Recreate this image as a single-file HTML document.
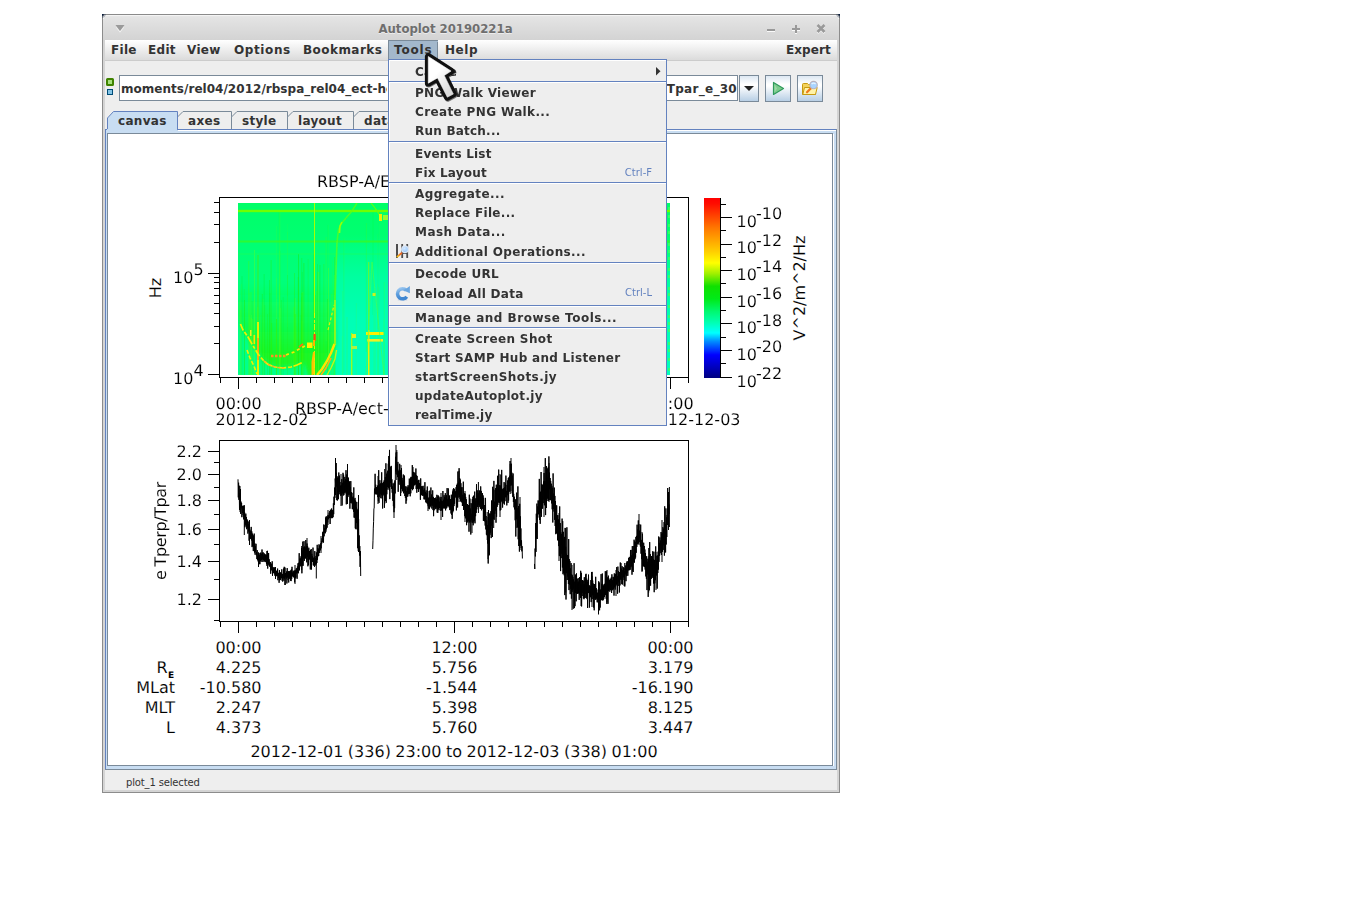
<!DOCTYPE html>
<html><head><meta charset="utf-8"><title>Autoplot 20190221a</title>
<style>
html,body{margin:0;padding:0;background:#fff;}
body{width:1345px;height:916px;position:relative;overflow:hidden;font-family:"DejaVu Sans","Liberation Sans",sans-serif;}
.a{position:absolute;}
.ui{font-family:"DejaVu Sans","Liberation Sans",sans-serif;font-weight:bold;font-size:12px;letter-spacing:0.3px;color:#333;white-space:nowrap;line-height:16px;}
#win{left:102px;top:14px;width:736px;height:777px;border:1px solid #8c8c8c;background:#d4d4d4;}
#tbar{left:103px;top:15px;width:736px;height:25px;background:linear-gradient(#ececec 0,#e4e4e4 2px,#d3d3d3 100%);}
#title{left:103px;top:16px;text-shadow:0 1px 0 rgba(255,255,255,.55);width:685px;height:25px;text-align:center;font-family:"DejaVu Sans Condensed","DejaVu Sans",sans-serif;font-weight:bold;font-size:13px;line-height:25px;color:#6e6e6e;white-space:nowrap;}
#mbar{left:105px;top:40px;width:732px;height:20px;background:linear-gradient(#ffffff,#dbdbdb);border-bottom:1px solid #ccc;}
#content{left:105px;top:61px;width:732px;height:729px;background:#eee;}
.mi{top:42px;height:16px;}
#tools{left:388px;top:40px;width:50px;height:20px;background:#a3b8cc;box-sizing:border-box;border-top:1px solid #7a8a99;border-left:1px solid #7a8a99;}
#tools i{position:absolute;right:0;top:1px;width:1px;height:19px;background:#7a8a99;}
#tools b{display:none}
#field{left:119px;top:75px;width:617px;height:24px;border:1px solid #7a8a99;background:#fff;}
.btn{top:75px;height:25px;border:1px solid #7a8a99;background:linear-gradient(#dde8f3 0,#ffffff 33%,#ffffff 40%,#b8cfe5 100%);}
.tab{top:111px;height:18px;}
.tabt{top:113px;}
#pane{left:105px;top:129px;width:732px;height:641px;background:#c8ddf2;}
#canvas{left:108px;top:134px;width:724px;height:631px;background:#fff;}
#status{left:126px;top:777px;font-size:10px;font-weight:normal;line-height:12px;color:#333;letter-spacing:-0.15px;}
#popup{left:388px;top:59px;width:277px;height:365px;border:1px solid #6382bf;background:#eee;}
#popup .hl{left:0;top:0;width:277px;height:1px;background:#fff;}
#popup .hv{left:0;top:0;width:1px;height:365px;background:#fff;}
.sep{left:389px;width:277px;height:1px;background:#6382bf;border-bottom:1px solid #fff;}
.it{left:415px;}
.acc{font-size:10px;font-weight:normal;color:#6382bf;line-height:12px;letter-spacing:0;}
svg text{font-family:"DejaVu Sans","Liberation Sans",sans-serif;font-size:16px;fill:#000;word-spacing:-0.6px;text-rendering:geometricPrecision;stroke:#fff;stroke-width:0.12px;paint-order:fill stroke;}
</style></head><body>
<div id="win" class="a"></div>
<div id="tbar" class="a"></div>
<svg class="a" style="left:102px;top:14px" width="738" height="6" viewBox="0 0 738 6">
<path d="M0 0H5L0 5Z M738 0H733L738 5Z" fill="#061a3a"/>
<path d="M0.5 5V3.5Q0.5 0.5 3.5 0.5H734.5Q737.5 0.5 737.5 3.5V5" fill="none" stroke="#8a8a8a"/>
<path d="M1.5 5V3.5Q1.5 1.5 3.5 1.5H734.5Q736.5 1.5 736.5 3.5V5" fill="none" stroke="#f4f4f4"/>
</svg>
<div id="title" class="a">Autoplot 20190221a</div>
<svg class="a" style="left:110px;top:20px" width="24" height="16" viewBox="0 0 24 16"><path d="M5.5 5H14.5L10 11Z" fill="#9a9a9a"/><path d="M6.3 7.3L10 12.2L13.7 7.3" fill="none" stroke="#f2f2f2" stroke-width=".9"/><path d="M6 10.2L9.5 10.2" stroke="#eee" stroke-width="0" /></svg>
<svg class="a" style="left:760px;top:20px" width="76" height="18" viewBox="0 0 76 18">
<g fill="#fafafa"><rect x="7" y="11" width="8" height="1"/><rect x="35" y="13" width="2" height="1"/><rect x="32" y="10" width="3" height="1"/><rect x="37" y="10" width="3" height="1"/></g>
<g stroke="#fafafa" stroke-width="2.2" fill="none"><path d="M57.5 6L64.5 13M64.5 6L57.5 13"/></g>
<g fill="#999"><rect x="7" y="9" width="8" height="2"/><rect x="32" y="8" width="8" height="2"/><rect x="35" y="5" width="2" height="8"/></g>
<g stroke="#999" stroke-width="2.6" fill="none"><path d="M57.5 5L64.5 12M64.5 5L57.5 12"/></g>
</svg>
<div id="mbar" class="a"></div>
<div id="content" class="a"></div>
<div id="tools" class="a"><i></i><b></b></div>
<div class="a ui mi" style="left:111px">File</div>
<div class="a ui mi" style="left:148px">Edit</div>
<div class="a ui mi" style="left:187px">View</div>
<div class="a ui mi" style="left:234px;letter-spacing:.6px">Options</div>
<div class="a ui mi" style="left:303px;letter-spacing:.45px">Bookmarks</div>
<div class="a ui mi" style="left:394px;letter-spacing:.8px">Tools</div>
<div class="a ui mi" style="left:445px;letter-spacing:.55px">Help</div>
<div class="a ui mi" style="left:786px;letter-spacing:.06px">Expert</div>
<!-- address bar -->
<div class="a" style="left:106px;top:78px;width:4px;height:4px;border:2px solid #3f8300;background:#a6e07c;border-radius:1.5px"></div>
<div class="a" style="left:107px;top:89px;width:4px;height:4px;border:1px solid #004c78;background:#82c4e6"></div>
<div id="field" class="a"></div>
<div class="a ui" style="left:121px;top:81px;width:266px;overflow:hidden;letter-spacing:0.03px">moments/rel04/2012/rbspa_rel04_ect-hope-MOM-L3_$Y$m$d_v$(v,sep).cdf</div>
<div class="a ui" style="left:560px;top:81px;width:177px;overflow:hidden;text-align:right;direction:rtl"><span style="direction:ltr;unicode-bidi:bidi-override">?Tperp_e_30/Tpar_e_30</span></div>
<div class="a btn" style="left:739px;width:18px"></div>
<svg class="a" style="left:743px;top:85px" width="12" height="8"><path d="M1 1H11L6 6Z" fill="#222"/></svg>
<div class="a btn" style="left:765px;width:24px"></div>
<svg class="a" style="left:765px;top:75px" width="26" height="27" viewBox="0 0 26 27"><path d="M8.5 7.5V19.5L18.5 13.5Z" fill="#7ccb8c" stroke="#2f9a5c" stroke-width="1.2" stroke-linejoin="round"/><path d="M9.5 9.5V17.5L12 13.5Z" fill="#a8e0b0" opacity=".7"/></svg>
<div class="a btn" style="left:797px;width:24px"></div>
<svg class="a" style="left:797px;top:75px" width="26" height="27" viewBox="0 0 26 27">
<path d="M5.5 9.5Q5.5 8.5 6.5 8.5H10.5L11.5 9.5H17.5Q18.5 9.5 18.5 10.5V19.5H5.5Z" fill="#f3d25c" stroke="#c79a10"/>
<path d="M7.5 12.5H20.2L18.5 19.5H5.8Z" fill="#fff3a8" stroke="#c79a10" stroke-linejoin="round"/>
<path d="M10 17.3L13.6 13.4" stroke="#ee7a1c" stroke-width="2.2" stroke-linecap="round"/>
<circle cx="16.6" cy="10.1" r="3.7" fill="#a9d4ff" stroke="#b9b2bd" stroke-width="1.1"/>
<path d="M14.6 9.2Q16.4 7 18.6 9" stroke="#e6f3ff" stroke-width="1.2" fill="none"/>
</svg>
<!-- tabs -->
<svg class="a" style="left:105px;top:108px" width="290" height="24" viewBox="105 108 290 24">
<g fill="#eee" stroke="#7a8a99">
<path d="M177.5 129.5V117L183 111.5H231.5V129.5"/>
<path d="M231.5 117L237 111.5H287.5V129.5"/>
<path d="M287.5 117L293 111.5H353.5V129.5"/>
<path d="M353.5 117L359 111.5H420.5V129.5"/>
</g>
<path d="M107.5 130V118L113.5 111.5H177.5V129.5" fill="#c8ddf2" stroke="#6382bf"/>
</svg>
<div class="a ui tabt" style="left:118px">canvas</div>
<div class="a ui tabt" style="left:188px">axes</div>
<div class="a ui tabt" style="left:242px">style</div>
<div class="a ui tabt" style="left:298px">layout</div>
<div class="a ui tabt" style="left:364px">data</div>
<div id="pane" class="a"></div>
<div class="a" style="left:105px;top:129px;width:732px;height:1px;background:#6382bf"></div>
<div class="a" style="left:107px;top:129px;width:70px;height:1px;background:#c8ddf2"></div>
<div class="a" style="left:178px;top:130px;width:658px;height:1px;background:#fff"></div>
<div class="a" style="left:105px;top:129px;width:1px;height:641px;background:#6382bf"></div>
<div class="a" style="left:836px;top:129px;width:1px;height:641px;background:#7a8a99"></div>
<div class="a" style="left:105px;top:769px;width:732px;height:1px;background:#7a8a99"></div>
<div class="a" style="left:107px;top:133px;width:726px;height:633px;background:#7a8a99"></div>
<div id="canvas" class="a"></div>
<div class="a" style="left:833px;top:134px;width:1px;height:632px;background:#fff"></div>
<div id="status" class="a ui">plot_1 selected</div>
<svg class="a" style="left:108px;top:134px" width="724" height="631" viewBox="108 134 724 631" shape-rendering="crispEdges">
<defs>
<linearGradient id="cb" x1="0" y1="0" x2="0" y2="1">
<stop offset="0" stop-color="#ff0000"/><stop offset="0.03" stop-color="#ff0c00"/><stop offset="0.167" stop-color="#ff7800"/><stop offset="0.30" stop-color="#ffd000"/>
<stop offset="0.361" stop-color="#ffff00"/><stop offset="0.42" stop-color="#a0f000"/><stop offset="0.49" stop-color="#10e000"/><stop offset="0.56" stop-color="#00ea18"/>
<stop offset="0.63" stop-color="#00f870"/><stop offset="0.69" stop-color="#00ffb0"/><stop offset="0.75" stop-color="#00ffff"/><stop offset="0.795" stop-color="#0090ff"/>
<stop offset="0.872" stop-color="#0000ff"/><stop offset="0.93" stop-color="#0000c8"/><stop offset="1" stop-color="#000080"/>
</linearGradient>
<linearGradient id="sg1" x1="0" y1="0" x2="0" y2="1"><stop offset="0" stop-color="#00ff68"/><stop offset="0.35" stop-color="#00ff78"/><stop offset="1" stop-color="#00ff8c"/></linearGradient>
<radialGradient id="sg2" cx="0.5" cy="1" r="1" gradientTransform="translate(0 0) scale(1 1)"><stop offset="0" stop-color="#10f000" stop-opacity="1"/><stop offset="0.55" stop-color="#08f810" stop-opacity=".85"/><stop offset="1" stop-color="#00ff40" stop-opacity="0"/></radialGradient>
<radialGradient id="sg3" cx="0.5" cy="0.75" r="0.7"><stop offset="0" stop-color="#00ffc0" stop-opacity="1"/><stop offset="0.6" stop-color="#00ffa8" stop-opacity=".8"/><stop offset="1" stop-color="#00ff80" stop-opacity="0"/></radialGradient>
<clipPath id="spc"><rect x="238" y="203" width="432" height="172"/></clipPath>
<filter id="bl" x="-20%" y="-20%" width="140%" height="140%"><feGaussianBlur stdDeviation="0.6"/></filter>
</defs>
<g clip-path="url(#spc)" shape-rendering="auto">
<rect x="238" y="203" width="433" height="172" fill="url(#sg1)"/>
<defs><filter id="b8" x="-50%" y="-50%" width="200%" height="200%"><feGaussianBlur stdDeviation="9"/></filter><filter id="b1" x="-50%" y="-50%" width="200%" height="200%"><feGaussianBlur stdDeviation="0.5"/></filter></defs>
<defs><linearGradient id="cy" x1="0" y1="0" x2="0" y2="1"><stop offset="0" stop-color="#00ffb0" stop-opacity="0"/><stop offset="0.3" stop-color="#00ffb0" stop-opacity=".7"/><stop offset="0.6" stop-color="#00ffb8" stop-opacity=".95"/><stop offset="1" stop-color="#00ffbc" stop-opacity="1"/></linearGradient><linearGradient id="gr" x1="0" y1="0" x2="0" y2="1"><stop offset="0.25" stop-color="#18f820" stop-opacity="0"/><stop offset="0.55" stop-color="#18f820" stop-opacity=".45"/><stop offset="0.8" stop-color="#1cf618" stop-opacity=".85"/><stop offset="1" stop-color="#1cf618" stop-opacity=".9"/></linearGradient><filter id="b2" x="-10%" y="-10%" width="120%" height="120%"><feGaussianBlur stdDeviation="2.2"/></filter></defs>
<rect x="336" y="235" width="336" height="141" fill="url(#cy)"/>
<rect x="331" y="300" width="8" height="76" fill="#00ffa0" opacity=".5" filter="url(#b2)"/>
<path d="M236 250H335.5V344L327 361L318 378H309L303 362L291 367H275L263 360L252 344L243 330L236 314Z" fill="url(#gr)" filter="url(#b2)"/>
<path d="M236 330L243 336L252 350L262 364L275 371H291L303 366L308 378H236Z" fill="#00ff8c" opacity=".7" filter="url(#b2)"/>
<g filter="url(#b1)"><rect x="261.8" y="294" width="1.0" height="81" fill="#20e800" opacity="0.31"/><rect x="294.8" y="298" width="0.8" height="77" fill="#60ff20" opacity="0.33"/><rect x="257.4" y="307" width="0.8" height="68" fill="#60ff20" opacity="0.35"/><rect x="253.5" y="301" width="1.0" height="74" fill="#60ff20" opacity="0.18"/><rect x="313.6" y="263" width="0.8" height="112" fill="#30f000" opacity="0.39"/><rect x="318.1" y="272" width="1.0" height="103" fill="#60ff20" opacity="0.39"/><rect x="280.0" y="308" width="0.6" height="67" fill="#60ff20" opacity="0.42"/><rect x="248.4" y="261" width="0.8" height="114" fill="#50ff10" opacity="0.44"/><rect x="280.9" y="300" width="0.8" height="75" fill="#20e800" opacity="0.32"/><rect x="276.0" y="278" width="1.0" height="97" fill="#60ff20" opacity="0.24"/><rect x="271.3" y="323" width="0.8" height="52" fill="#30f000" opacity="0.45"/><rect x="303.4" y="263" width="1.0" height="112" fill="#20e800" opacity="0.42"/><rect x="293.6" y="307" width="1.0" height="68" fill="#50ff10" opacity="0.40"/><rect x="294.1" y="273" width="0.8" height="102" fill="#30f000" opacity="0.41"/><rect x="334.0" y="257" width="0.8" height="118" fill="#30f000" opacity="0.42"/><rect x="240.9" y="284" width="0.6" height="91" fill="#60ff20" opacity="0.19"/><rect x="298.0" y="254" width="1.0" height="121" fill="#20e800" opacity="0.42"/><rect x="333.1" y="290" width="0.8" height="85" fill="#30f000" opacity="0.18"/><rect x="249.4" y="293" width="0.8" height="82" fill="#50ff10" opacity="0.26"/><rect x="264.3" y="305" width="0.8" height="70" fill="#20e800" opacity="0.28"/><rect x="252.3" y="319" width="0.8" height="56" fill="#60ff20" opacity="0.41"/><rect x="276.1" y="319" width="1.0" height="56" fill="#30f000" opacity="0.44"/><rect x="316.9" y="272" width="0.8" height="103" fill="#50ff10" opacity="0.30"/><rect x="263.8" y="274" width="0.6" height="101" fill="#20e800" opacity="0.39"/><rect x="333.8" y="275" width="1.0" height="100" fill="#60ff20" opacity="0.34"/><rect x="251.8" y="301" width="0.8" height="74" fill="#20e800" opacity="0.28"/><rect x="327.1" y="299" width="1.0" height="76" fill="#20e800" opacity="0.31"/><rect x="295.6" y="326" width="0.8" height="49" fill="#30f000" opacity="0.25"/><rect x="282.8" y="297" width="0.6" height="78" fill="#20e800" opacity="0.28"/><rect x="269.0" y="280" width="0.8" height="95" fill="#20e800" opacity="0.39"/><rect x="249.1" y="315" width="0.8" height="60" fill="#50ff10" opacity="0.32"/><rect x="301.8" y="272" width="0.6" height="103" fill="#20e800" opacity="0.36"/><rect x="301.4" y="258" width="0.8" height="117" fill="#20e800" opacity="0.36"/><rect x="260.5" y="315" width="0.6" height="60" fill="#50ff10" opacity="0.27"/><rect x="301.4" y="321" width="0.8" height="54" fill="#60ff20" opacity="0.24"/><rect x="250.6" y="292" width="0.8" height="83" fill="#50ff10" opacity="0.40"/><rect x="319.5" y="265" width="0.8" height="110" fill="#20e800" opacity="0.40"/><rect x="300.6" y="315" width="1.0" height="60" fill="#20e800" opacity="0.22"/><rect x="267.0" y="314" width="0.8" height="61" fill="#20e800" opacity="0.27"/><rect x="279.0" y="284" width="0.6" height="91" fill="#60ff20" opacity="0.43"/><rect x="254.0" y="250" width="1.0" height="125" fill="#60ff20" opacity="0.44"/><rect x="328.0" y="268" width="1.0" height="107" fill="#60ff20" opacity="0.38"/><rect x="331.5" y="294" width="0.6" height="81" fill="#50ff10" opacity="0.41"/><rect x="332.2" y="260" width="0.6" height="115" fill="#50ff10" opacity="0.19"/><rect x="316.1" y="291" width="0.8" height="84" fill="#50ff10" opacity="0.34"/><rect x="240.3" y="310" width="1.0" height="65" fill="#50ff10" opacity="0.26"/><rect x="302.6" y="292" width="0.6" height="83" fill="#60ff20" opacity="0.43"/><rect x="297.8" y="277" width="1.0" height="98" fill="#20e800" opacity="0.31"/><rect x="314.1" y="278" width="0.6" height="97" fill="#50ff10" opacity="0.32"/><rect x="317.4" y="264" width="0.6" height="111" fill="#20e800" opacity="0.40"/><rect x="239.7" y="300" width="0.6" height="75" fill="#60ff20" opacity="0.38"/><rect x="262.8" y="299" width="0.6" height="76" fill="#60ff20" opacity="0.31"/><rect x="313.5" y="250" width="0.6" height="125" fill="#30f000" opacity="0.19"/><rect x="243.8" y="289" width="1.0" height="86" fill="#30f000" opacity="0.20"/><rect x="287.2" y="275" width="0.6" height="100" fill="#20e800" opacity="0.27"/><rect x="301.1" y="297" width="0.8" height="78" fill="#20e800" opacity="0.23"/><rect x="270.6" y="260" width="1.0" height="115" fill="#30f000" opacity="0.38"/><rect x="315.3" y="295" width="0.8" height="80" fill="#30f000" opacity="0.30"/><rect x="301.4" y="293" width="1.0" height="82" fill="#30f000" opacity="0.42"/><rect x="244.1" y="300" width="0.8" height="75" fill="#20e800" opacity="0.44"/><rect x="279.2" y="251" width="1.0" height="124" fill="#50ff10" opacity="0.25"/><rect x="295.6" y="314" width="0.8" height="61" fill="#50ff10" opacity="0.22"/><rect x="241.7" y="276" width="0.6" height="99" fill="#20e800" opacity="0.31"/><rect x="250.8" y="315" width="1.0" height="60" fill="#60ff20" opacity="0.21"/><rect x="269.6" y="293" width="0.8" height="82" fill="#30f000" opacity="0.22"/><rect x="313.3" y="254" width="1.0" height="121" fill="#30f000" opacity="0.21"/><rect x="323.5" y="264" width="0.8" height="111" fill="#30f000" opacity="0.41"/><rect x="250.6" y="318" width="1.0" height="57" fill="#60ff20" opacity="0.44"/><rect x="294.6" y="314" width="1.0" height="61" fill="#30f000" opacity="0.32"/><rect x="307.7" y="259" width="1.0" height="116" fill="#30f000" opacity="0.20"/><rect x="287.3" y="224" width="0.6" height="72" fill="#30ff30" opacity="0.19"/><rect x="276.2" y="226" width="1.0" height="73" fill="#30ff30" opacity="0.27"/><rect x="378.9" y="224" width="0.6" height="90" fill="#30ff30" opacity="0.20"/><rect x="377.5" y="234" width="0.6" height="95" fill="#30ff30" opacity="0.26"/><rect x="325.4" y="237" width="1.5" height="104" fill="#30ff30" opacity="0.28"/><rect x="372.7" y="209" width="0.6" height="106" fill="#30ff30" opacity="0.25"/><rect x="343.1" y="238" width="1.5" height="135" fill="#30ff30" opacity="0.19"/><rect x="278.8" y="210" width="1.5" height="108" fill="#30ff30" opacity="0.34"/><rect x="365.9" y="223" width="1.0" height="129" fill="#30ff30" opacity="0.32"/><rect x="327.7" y="225" width="1.0" height="157" fill="#30ff30" opacity="0.21"/><rect x="278.9" y="233" width="0.6" height="63" fill="#30ff30" opacity="0.22"/><rect x="287.0" y="232" width="0.6" height="95" fill="#30ff30" opacity="0.29"/><rect x="373.7" y="292" width="0.8" height="83" fill="#40ff40" opacity="0.37"/><rect x="383.3" y="319" width="0.8" height="56" fill="#40ff40" opacity="0.21"/><rect x="387.7" y="284" width="0.8" height="91" fill="#40ff40" opacity="0.48"/><rect x="377.6" y="333" width="0.8" height="42" fill="#40ff40" opacity="0.21"/><rect x="383.7" y="333" width="0.8" height="42" fill="#40ff40" opacity="0.39"/><rect x="377.3" y="284" width="0.8" height="91" fill="#40ff40" opacity="0.27"/><rect x="352.2" y="333" width="0.8" height="42" fill="#40ff40" opacity="0.43"/><rect x="346.6" y="317" width="0.8" height="58" fill="#40ff40" opacity="0.40"/><rect x="341.8" y="336" width="0.8" height="39" fill="#40ff40" opacity="0.25"/><rect x="342.2" y="291" width="0.8" height="84" fill="#40ff40" opacity="0.23"/><rect x="378.3" y="287" width="0.8" height="88" fill="#40ff40" opacity="0.28"/><rect x="383.9" y="282" width="0.8" height="93" fill="#40ff40" opacity="0.34"/><rect x="375.2" y="300" width="0.8" height="75" fill="#40ff40" opacity="0.21"/><rect x="355.9" y="303" width="0.8" height="72" fill="#40ff40" opacity="0.22"/></g>
<g filter="url(#b1)">
<rect x="238" y="210" width="433" height="2" fill="#7cff00"/><rect x="238" y="209.5" width="433" height="3" fill="#60ff10" opacity=".4"/>
<rect x="238" y="240.5" width="433" height="2" fill="#38f820" opacity=".75"/>
<rect x="238" y="253.5" width="433" height="1" fill="#20ff50" opacity=".5"/>
<rect x="314" y="203" width="1" height="110" fill="#a8ff00"/>
<path d="M314.5 313V375" stroke="#d8f800" stroke-width="1" stroke-dasharray="5 2 3 1 6 2"/>
<rect x="313.5" y="334" width="2.2" height="7" fill="#ff4a10"/><rect x="313" y="340" width="2" height="6" fill="#ffb000"/><rect x="313" y="352" width="2" height="22" fill="#ffd800" opacity=".9"/>
<rect x="257.5" y="255" width="1" height="70" fill="#50f000" opacity=".7"/><rect x="257" y="322" width="2" height="53" fill="#e0f000"/><rect x="257.3" y="338" width="1.6" height="22" fill="#ff9a10"/>
<rect x="253.5" y="335" width="1.6" height="9" fill="#ffe000"/><rect x="250" y="330" width="1.5" height="6" fill="#f0f020"/>
<g fill="none" filter="url(#b1)">
<path d="M240.5 324L243 330L248 337L252 344L258 354L263 360L268 364.5L275 367L283 368L291 367L297 365L303 362" stroke="#f0f000" stroke-width="1.7" stroke-dasharray="7 2 4 1.5 9 2 3 2"/>
<path d="M264 361L270 365.5L277 367.5L284 368" stroke="#ffb020" stroke-width="1.6" stroke-dasharray="3 2"/>
<path d="M247 350L250 358L254 366L257 374" stroke="#f0f000" stroke-width="1.6" stroke-dasharray="4 2"/>
<path d="M271 356H286" stroke="#ff9020" stroke-width="2.6" stroke-dasharray="2.5 1.5"/>
<path d="M286 355L294 352L300 348.5L306 345.5" stroke="#f8e800" stroke-width="1.8" stroke-dasharray="3 3"/>
<path d="M307 342.5H312.5V348H307Z" fill="#fff000" stroke="none"/>
<path d="M299 347L303 344" stroke="#ff7010" stroke-width="1.6"/>
<path d="M317 375L322 369L327 361L331 353L334.5 344" stroke="#ffe400" stroke-width="2.4"/>
<path d="M321 375L326 368L331 358" stroke="#ffb010" stroke-width="1.6"/>
<path d="M327 375L331 368L335 359L336.5 350" stroke="#f0f000" stroke-width="1.4" opacity=".8"/>
<path d="M312.5 375V362L314 352" stroke="#ffc000" stroke-width="2"/>
<path d="M335 345V300" stroke="#c8f800" stroke-width="1.3"/>
<path d="M328 330L331 318L334 305" stroke="#e0f000" stroke-width="1.2" stroke-dasharray="3 2"/>
<path d="M335 300L336 270L337 242L338.5 230L341 224L346 218L352 211L357 203" stroke="#60ff10" stroke-width="1.6" opacity=".7"/>
<path d="M339.5 233L340 226L342 222" stroke="#b0ff00" stroke-width="1.6" opacity=".8"/>
<path d="M371 203L375 208L379 214L381 220" stroke="#60ff10" stroke-width="1.2"/>
</g>
<rect x="379" y="214" width="3" height="7" fill="#f0f000"/><rect x="383" y="215" width="5" height="5" fill="#c0f820" opacity=".8"/>
<rect x="351.2" y="333" width="1" height="42" fill="#c0f800"/><rect x="368.2" y="262" width="1" height="113" fill="#70f820"/><rect x="368" y="330" width="1.4" height="45" fill="#e8f000"/>
<rect x="352" y="334" width="4" height="4" fill="#e0f020" filter="url(#b1)"/><rect x="351" y="346" width="6" height="3" fill="#b0f040" filter="url(#b1)"/>
<rect x="366" y="332" width="17.5" height="3" fill="#fff000" filter="url(#b1)"/><rect x="367" y="339" width="16" height="2.6" fill="#f0f020" filter="url(#b1)"/>
<rect x="372.5" y="293" width="3.5" height="3" fill="#d0f020"/>
<path d="M372 262L366 375M372 262L384 375" stroke="#50ff40" stroke-width="1" opacity=".6" fill="none"/>
</g>
<rect x="668" y="207" width="2" height="3" fill="#40ff60" opacity=".8"/>
<rect x="668" y="215" width="2" height="3" fill="#40ff60" opacity=".8"/>
<rect x="668" y="224" width="2" height="3" fill="#40ff60" opacity=".8"/>
<rect x="668" y="231" width="2" height="3" fill="#40ff60" opacity=".8"/>
<rect x="668" y="243" width="2" height="3" fill="#40ff60" opacity=".8"/>
<rect x="668" y="250" width="2" height="3" fill="#40ff60" opacity=".8"/>
<rect x="668" y="257" width="2" height="3" fill="#40ff60" opacity=".8"/>
<rect x="668" y="268" width="2" height="3" fill="#40ff60" opacity=".8"/>
<rect x="668" y="275" width="2" height="3" fill="#40ff60" opacity=".8"/>
<rect x="668" y="287" width="2" height="3" fill="#40ff60" opacity=".8"/>
<rect x="668" y="293" width="2" height="3" fill="#40ff60" opacity=".8"/>
<rect x="668" y="305" width="2" height="3" fill="#40ff60" opacity=".8"/>
<rect x="668" y="315" width="2" height="3" fill="#40ff60" opacity=".8"/>
<rect x="668" y="322" width="2" height="3" fill="#40ff60" opacity=".8"/>
<rect x="668" y="329" width="2" height="3" fill="#40ff60" opacity=".8"/>
<rect x="668" y="342" width="2" height="3" fill="#40ff60" opacity=".8"/>
<rect x="668" y="349" width="2" height="3" fill="#40ff60" opacity=".8"/>
<rect x="668" y="358" width="2" height="3" fill="#40ff60" opacity=".8"/>
<rect x="668" y="368" width="2" height="3" fill="#40ff60" opacity=".8"/>
<rect x="668" y="376" width="2" height="3" fill="#40ff60" opacity=".8"/>
</g>
<g fill="none" stroke="#000" stroke-width="1">
<rect x="219.5" y="197.5" width="469" height="180"/>
<rect x="219.5" y="440.5" width="469" height="181"/>
<path d="M208 374.5H219M214 343.5H219M214 326.5H219M214 313.5H219M214 303.5H219M214 295.5H219M214 288.5H219M214 282.5H219M214 277.5H219M208 273.5H219M214 242.5H219M214 224.5H219M214 212.5H219M214 202.5H219M220.5 377.5V382.5M238.5 377.5V388.5M256.5 377.5V382.5M274.5 377.5V382.5M292.5 377.5V382.5M310.5 377.5V382.5M328.5 377.5V382.5M346.5 377.5V382.5M364.5 377.5V382.5M382.5 377.5V382.5M400.5 377.5V382.5M418.5 377.5V382.5M436.5 377.5V382.5M454.5 377.5V388.5M472.5 377.5V382.5M490.5 377.5V382.5M508.5 377.5V382.5M526.5 377.5V382.5M544.5 377.5V382.5M562.5 377.5V382.5M580.5 377.5V382.5M598.5 377.5V382.5M616.5 377.5V382.5M634.5 377.5V382.5M652.5 377.5V382.5M670.5 377.5V388.5M688.5 377.5V382.5M220.5 621.5V626.5M238.5 621.5V632.5M256.5 621.5V626.5M274.5 621.5V626.5M292.5 621.5V626.5M310.5 621.5V626.5M328.5 621.5V626.5M346.5 621.5V626.5M364.5 621.5V626.5M382.5 621.5V626.5M400.5 621.5V626.5M418.5 621.5V626.5M436.5 621.5V626.5M454.5 621.5V632.5M472.5 621.5V626.5M490.5 621.5V626.5M508.5 621.5V626.5M526.5 621.5V626.5M544.5 621.5V626.5M562.5 621.5V626.5M580.5 621.5V626.5M598.5 621.5V626.5M616.5 621.5V626.5M634.5 621.5V626.5M652.5 621.5V626.5M670.5 621.5V632.5M688.5 621.5V626.5M214 620.5H219M208 599.5H219M214 579.5H219M208 561.5H219M214 544.5H219M208 529.5H219M214 514.5H219M208 500.5H219M214 487.5H219M208 474.5H219M214 462.5H219M208 451.5H219M720 377.5H731.5M720 363.5H725.5M720 350.5H731.5M720 337.5H725.5M720 323.5H731.5M720 310.5H725.5M720 297.5H731.5M720 283.5H725.5M720 270.5H731.5M720 257.5H725.5M720 244.5H731.5M720 230.5H725.5M720 217.5H731.5M720 204.5H725.5M720.5 198V378"/>
</g>
<rect x="704" y="198" width="16" height="180" fill="url(#cb)"/>
<g fill="none" stroke="#000" stroke-width="1" shape-rendering="auto" stroke-linejoin="round">
<path d="M238.0 479.3 L238.3 497.4 L238.6 482.7 L238.9 499.8 L239.2 485.7 L239.5 510.0 L239.8 493.2 L240.1 507.8 L240.4 489.0 L240.7 513.9 L241.0 501.6 L241.3 508.4 L241.6 503.0 L241.9 517.2 L242.2 506.2 L242.5 513.0 L242.8 505.8 L243.1 515.2 L243.4 505.8 L243.7 519.3 L244.0 505.8 L244.3 519.5 L244.6 512.3 L244.9 527.3 L245.2 515.0 L245.5 524.7 L245.8 513.6 L246.1 526.2 L246.4 517.0 L246.7 529.2 L247.0 519.3 L247.3 527.8 L247.6 520.4 L247.9 533.6 L248.2 524.1 L248.5 531.4 L248.8 521.5 L249.1 540.7 L249.4 529.0 L249.7 534.3 L250.0 529.7 L250.3 538.6 L250.6 531.2 L250.9 539.1 L251.2 526.9 L251.5 540.4 L251.8 531.4 L252.1 547.1 L252.4 533.6 L252.7 546.1 L253.0 534.9 L253.3 551.1 L253.6 535.9 L253.9 546.6 L254.2 533.6 L254.5 552.5 L254.8 543.4 L255.1 554.7 L255.4 546.3 L255.7 551.8 L256.0 543.8 L256.3 555.2 L256.6 552.0 L256.9 559.1 L257.2 550.1 L257.5 559.8 L257.8 555.8 L258.1 561.4 L258.4 552.4 L258.7 561.4 L259.0 553.4 L259.3 564.1 L259.6 555.0 L259.9 564.2 L260.2 552.9 L260.5 561.0 L260.8 552.6 L261.1 561.9 L261.4 553.8 L261.7 560.1 L262.0 549.5 L262.3 559.3 L262.6 552.7 L262.9 562.0 L263.2 552.4 L263.5 560.0 L263.8 555.2 L264.1 561.4 L264.4 553.5 L264.7 561.3 L265.0 556.2 L265.3 562.1 L265.6 554.4 L265.9 560.4 L266.2 555.4 L266.5 564.1 L266.8 554.7 L267.1 564.4 L267.4 550.8 L267.7 568.6 L268.0 554.8 L268.3 564.2 L268.6 553.0 L268.9 565.4 L269.2 559.3 L269.5 566.5 L269.8 562.2 L270.1 566.3 L270.4 562.1 L270.7 573.7 L271.0 563.4 L271.3 569.8 L271.6 564.0 L271.9 570.5 L272.2 561.3 L272.5 575.8 L272.8 567.0 L273.1 572.5 L273.4 567.5 L273.7 573.1 L274.0 568.9 L274.3 573.5 L274.6 567.4 L274.9 575.7 L275.2 567.8 L275.5 576.5 L275.8 570.1 L276.1 575.9 L276.4 571.1 L276.7 576.2 L277.0 571.0 L277.3 575.9 L277.6 568.6 L277.9 580.2 L278.2 573.1 L278.5 578.0 L278.8 572.8 L279.1 582.8 L279.4 570.1 L279.7 580.3 L280.0 572.1 L280.3 580.0 L280.6 572.7 L280.9 578.6 L281.2 573.4 L281.5 578.0 L281.8 569.3 L282.1 580.7 L282.4 574.2 L282.7 581.6 L283.0 573.8 L283.3 578.3 L283.6 568.5 L283.9 580.7 L284.2 566.8 L284.5 578.6 L284.8 567.3 L285.1 585.0 L285.4 573.0 L285.7 577.1 L286.0 573.8 L286.3 578.6 L286.6 571.4 L286.9 583.5 L287.2 568.1 L287.5 577.5 L287.8 571.6 L288.1 580.1 L288.4 571.1 L288.7 582.5 L289.0 573.0 L289.3 578.8 L289.6 571.2 L289.9 577.3 L290.2 570.9 L290.5 580.6 L290.8 570.4 L291.1 581.1 L291.4 569.4 L291.7 578.9 L292.0 566.8 L292.3 576.4 L292.6 572.6 L292.9 576.2 L293.2 570.7 L293.5 577.2 L293.8 571.6 L294.1 577.4 L294.4 570.8 L294.7 582.4 L295.0 570.3 L295.3 578.4 L295.6 570.5 L295.9 577.5 L296.2 568.6 L296.5 573.4 L296.8 568.2 L297.1 578.8 L297.4 566.5 L297.7 572.7 L298.0 563.3 L298.3 573.3 L298.6 562.8 L298.9 568.8 L299.2 553.2 L299.5 570.4 L299.8 558.6 L300.1 565.3 L300.4 558.5 L300.7 566.3 L301.0 556.3 L301.3 565.4 L301.6 548.2 L301.9 573.3 L302.2 550.6 L302.5 565.7 L302.8 541.6 L303.1 565.8 L303.4 547.4 L303.7 558.7 L304.0 541.2 L304.3 560.9 L304.6 546.5 L304.9 557.9 L305.2 547.5 L305.5 558.5 L305.8 540.0 L306.1 555.4 L306.4 546.2 L306.7 562.3 L307.0 543.5 L307.3 556.8 L307.6 546.2 L307.9 566.3 L308.2 549.4 L308.5 565.1 L308.8 547.7 L309.1 558.8 L309.4 551.0 L309.7 559.6 L310.0 551.9 L310.3 569.5 L310.6 550.0 L310.9 565.3 L311.2 549.0 L311.5 569.5 L311.8 553.8 L312.1 561.9 L312.4 556.3 L312.7 561.8 L313.0 547.6 L313.3 565.3 L313.6 558.1 L313.9 565.5 L314.2 557.2 L314.5 566.9 L314.8 551.1 L315.1 565.7 L315.4 557.9 L315.7 564.6 L316.0 555.9 L316.3 564.1 L316.6 553.0 L316.9 563.0 L317.2 544.8 L317.5 559.8 L317.8 547.9 L318.1 556.3 L318.4 548.8 L318.7 556.0 L319.0 544.3 L319.3 553.0 L319.6 545.6 L319.9 550.8 L320.2 544.9 L320.5 549.8 L320.8 543.2 L321.1 548.3 L321.4 540.9 L321.7 543.7 L322.0 538.3 L322.3 542.3 L322.6 532.3 L322.9 540.7 L323.2 531.5 L323.5 542.6 L323.8 524.5 L324.1 536.3 L324.4 528.4 L324.7 532.7 L325.0 525.0 L325.3 533.3 L325.6 517.5 L325.9 531.7 L326.2 516.4 L326.5 529.2 L326.8 516.7 L327.1 527.7 L327.4 516.6 L327.7 522.4 L328.0 514.9 L328.3 519.3 L328.6 515.6 L328.9 518.3 L329.2 512.7 L329.5 517.9 L329.8 511.0 L330.1 524.0 L330.4 509.7 L330.7 517.8 L331.0 511.6 L331.3 518.2 L331.6 508.5 L331.9 517.5 L332.2 509.9 L332.5 518.1 L332.8 510.3 L333.1 517.2 L333.4 503.3 L333.7 514.2 L334.0 496.7 L334.3 504.9 L334.6 487.6 L334.9 497.9 L335.2 478.5 L335.5 483.6 L335.8 475.2 L336.1 486.8 L336.4 472.8 L336.7 485.8 L337.0 476.1 L337.3 500.6 L337.6 477.9 L337.9 499.5 L338.2 476.8 L338.5 499.0 L338.8 472.5 L339.1 494.1 L339.4 475.6 L339.7 491.9 L340.0 482.0 L340.3 494.7 L340.6 485.8 L340.9 496.0 L341.2 485.2 L341.5 495.1 L341.8 479.2 L342.1 505.5 L342.4 482.8 L342.7 493.5 L343.0 472.8 L343.3 495.5 L343.6 474.6 L343.9 495.1 L344.2 481.2 L344.5 492.6 L344.8 476.9 L345.1 493.4 L345.4 479.0 L345.7 491.9 L346.0 470.2 L346.3 504.3 L346.6 474.5 L346.9 501.6 L347.2 477.4 L347.5 494.7 L347.8 479.8 L348.1 496.8 L348.4 477.6 L348.7 494.8 L349.0 482.5 L349.3 494.5 L349.6 481.3 L349.9 508.7 L350.2 486.9 L350.5 503.1 L350.8 481.1 L351.1 501.8 L351.4 492.1 L351.7 503.3 L352.0 492.8 L352.3 509.1 L352.6 497.4 L352.9 509.2 L353.2 496.4 L353.5 511.7 L353.8 487.4 L354.1 517.6 L354.4 499.3 L354.7 517.6 L355.0 497.9 L355.3 528.3 L355.6 500.6 L355.9 529.2 L356.2 507.0 L356.5 523.1 L356.8 501.9 L357.1 529.3 L357.4 510.2 L357.7 548.2 L358.0 508.8 L358.3 550.9 L358.6 519.0 L358.9 545.9 L359.2 535.4 L359.5 555.5 L359.8 546.1 L360.1 566.9 L360.4 551.1 L360.7 576.0"/>
<path d="M372.7 549.0 L373.0 540.2 L373.3 528.1 L373.6 521.7 L373.9 508.9 L374.2 508.0 L374.5 488.6 L374.8 493.4 L375.1 473.8 L375.4 494.3 L375.7 484.7 L376.0 493.7 L376.3 487.3 L376.6 494.4 L376.9 487.0 L377.2 494.2 L377.5 485.9 L377.8 497.1 L378.1 485.1 L378.4 501.1 L378.7 470.2 L379.0 502.9 L379.3 484.4 L379.6 496.7 L379.9 480.2 L380.2 493.9 L380.5 483.5 L380.8 498.2 L381.1 483.5 L381.4 495.2 L381.7 472.3 L382.0 498.4 L382.3 483.4 L382.6 508.5 L382.9 482.8 L383.2 495.4 L383.5 482.0 L383.8 494.1 L384.1 480.4 L384.4 507.8 L384.7 480.7 L385.0 495.0 L385.3 477.1 L385.6 501.0 L385.9 463.3 L386.2 502.8 L386.5 474.1 L386.8 494.3 L387.1 472.6 L387.4 487.0 L387.7 470.7 L388.0 489.7 L388.3 463.7 L388.6 486.8 L388.9 460.8 L389.2 478.4 L389.5 449.9 L389.8 499.1 L390.1 467.8 L390.4 483.1 L390.7 466.7 L391.0 486.9 L391.3 465.9 L391.6 488.9 L391.9 479.3 L392.2 492.7 L392.5 486.5 L392.8 500.7 L393.1 483.3 L393.4 506.2 L393.7 492.3 L394.0 512.2 L394.3 482.6 L394.6 508.2 L394.9 480.4 L395.2 493.4 L395.5 456.8 L395.8 471.6 L396.1 452.5 L396.4 470.1 L396.7 452.0 L397.0 474.7 L397.3 464.3 L397.6 477.1 L397.9 461.9 L398.2 491.8 L398.5 471.4 L398.8 484.3 L399.1 469.7 L399.4 481.4 L399.7 463.8 L400.0 484.9 L400.3 470.2 L400.6 496.0 L400.9 470.8 L401.2 489.1 L401.5 468.2 L401.8 488.3 L402.1 477.9 L402.4 491.3 L402.7 480.4 L403.0 489.2 L403.3 474.5 L403.6 493.3 L403.9 483.7 L404.2 492.1 L404.5 475.6 L404.8 496.0 L405.1 489.1 L405.4 497.9 L405.7 486.3 L406.0 503.7 L406.3 491.1 L406.6 500.5 L406.9 486.6 L407.2 496.6 L407.5 487.7 L407.8 496.5 L408.1 485.2 L408.4 494.2 L408.7 486.7 L409.0 493.8 L409.3 478.6 L409.6 493.7 L409.9 481.2 L410.2 496.3 L410.5 477.7 L410.8 493.3 L411.1 476.8 L411.4 488.9 L411.7 477.0 L412.0 484.0 L412.3 465.1 L412.6 490.2 L412.9 471.8 L413.2 488.9 L413.5 472.0 L413.8 486.2 L414.1 476.0 L414.4 485.1 L414.7 472.5 L415.0 483.8 L415.3 473.5 L415.6 484.6 L415.9 468.5 L416.2 489.0 L416.5 475.4 L416.8 492.7 L417.1 475.9 L417.4 488.6 L417.7 480.9 L418.0 488.9 L418.3 480.1 L418.6 492.0 L418.9 479.8 L419.2 487.7 L419.5 483.1 L419.8 489.2 L420.1 483.8 L420.4 499.8 L420.7 478.4 L421.0 494.3 L421.3 486.5 L421.6 495.1 L421.9 486.1 L422.2 495.5 L422.5 486.7 L422.8 495.8 L423.1 485.8 L423.4 495.5 L423.7 490.2 L424.0 499.3 L424.3 488.5 L424.6 499.3 L424.9 482.2 L425.2 498.7 L425.5 492.1 L425.8 502.3 L426.1 490.4 L426.4 502.5 L426.7 493.3 L427.0 503.4 L427.3 486.5 L427.6 504.2 L427.9 498.4 L428.2 506.2 L428.5 498.3 L428.8 508.6 L429.1 497.2 L429.4 509.2 L429.7 490.7 L430.0 507.3 L430.3 497.4 L430.6 506.2 L430.9 487.5 L431.2 505.4 L431.5 494.5 L431.8 508.5 L432.1 498.8 L432.4 505.7 L432.7 490.4 L433.0 510.1 L433.3 496.9 L433.6 516.2 L433.9 498.0 L434.2 510.3 L434.5 498.1 L434.8 507.2 L435.1 498.3 L435.4 508.7 L435.7 497.6 L436.0 509.2 L436.3 499.1 L436.6 507.5 L436.9 494.8 L437.2 512.5 L437.5 496.7 L437.8 512.9 L438.1 495.3 L438.4 509.1 L438.7 496.1 L439.0 510.2 L439.3 501.6 L439.6 508.0 L439.9 497.3 L440.2 507.9 L440.5 499.1 L440.8 510.9 L441.1 496.9 L441.4 510.4 L441.7 500.5 L442.0 509.7 L442.3 501.2 L442.6 516.9 L442.9 491.0 L443.2 508.5 L443.5 499.8 L443.8 507.8 L444.1 495.2 L444.4 508.4 L444.7 497.1 L445.0 508.2 L445.3 493.2 L445.6 510.4 L445.9 497.9 L446.2 508.5 L446.5 495.3 L446.8 507.8 L447.1 488.1 L447.4 506.3 L447.7 499.3 L448.0 505.8 L448.3 488.4 L448.6 506.3 L448.9 497.9 L449.2 507.5 L449.5 495.5 L449.8 510.1 L450.1 499.0 L450.4 509.6 L450.7 499.0 L451.0 513.5 L451.3 494.7 L451.6 514.8 L451.9 498.2 L452.2 518.8 L452.5 491.6 L452.8 512.3 L453.1 489.4 L453.4 510.7 L453.7 488.1 L454.0 506.1 L454.3 489.1 L454.6 503.7 L454.9 491.5 L455.2 497.6 L455.5 491.4 L455.8 496.6 L456.1 487.2 L456.4 510.4 L456.7 484.9 L457.0 499.7 L457.3 483.6 L457.6 507.5 L457.9 471.5 L458.2 497.6 L458.5 481.8 L458.8 494.8 L459.1 468.2 L459.4 497.1 L459.7 478.1 L460.0 498.9 L460.3 479.5 L460.6 501.3 L460.9 483.2 L461.2 501.7 L461.5 487.5 L461.8 502.4 L462.1 487.2 L462.4 506.0 L462.7 494.8 L463.0 505.7 L463.3 481.7 L463.6 509.9 L463.9 499.5 L464.2 507.6 L464.5 493.4 L464.8 516.1 L465.1 493.7 L465.4 517.6 L465.7 496.9 L466.0 518.6 L466.3 499.3 L466.6 525.2 L466.9 505.9 L467.2 521.6 L467.5 504.1 L467.8 522.5 L468.1 505.6 L468.4 521.1 L468.7 505.0 L469.0 531.7 L469.3 494.7 L469.6 522.5 L469.9 498.6 L470.2 521.7 L470.5 508.6 L470.8 534.5 L471.1 503.1 L471.4 520.2 L471.7 513.9 L472.0 522.5 L472.3 499.1 L472.6 522.7 L472.9 496.8 L473.2 525.3 L473.5 495.7 L473.8 522.3 L474.1 499.8 L474.4 520.9 L474.7 491.6 L475.0 523.3 L475.3 498.4 L475.6 516.2 L475.9 500.9 L476.2 512.9 L476.5 484.2 L476.8 509.4 L477.1 492.8 L477.4 506.9 L477.7 490.3 L478.0 505.0 L478.3 494.7 L478.6 504.1 L478.9 493.1 L479.2 507.1 L479.5 490.5 L479.8 505.6 L480.1 490.9 L480.4 508.9 L480.7 486.4 L481.0 503.7 L481.3 490.9 L481.6 510.3 L481.9 495.4 L482.2 508.7 L482.5 493.2 L482.8 508.7 L483.1 495.4 L483.4 520.9 L483.7 497.8 L484.0 517.4 L484.3 505.0 L484.6 521.3 L484.9 509.1 L485.2 525.6 L485.5 497.9 L485.8 529.4 L486.1 516.0 L486.4 534.6 L486.7 520.4 L487.0 535.3 L487.3 525.4 L487.6 543.5 L487.9 525.1 L488.2 563.5 L488.5 510.0 L488.8 555.8 L489.1 520.2 L489.4 554.8 L489.7 513.5 L490.0 534.8 L490.3 513.7 L490.6 532.6 L490.9 511.2 L491.2 538.1 L491.5 500.5 L491.8 525.9 L492.1 506.7 L492.4 537.0 L492.7 486.8 L493.0 518.7 L493.3 499.9 L493.6 519.1 L493.9 480.9 L494.2 519.8 L494.5 501.7 L494.8 513.8 L495.1 490.1 L495.4 510.5 L495.7 488.1 L496.0 522.7 L496.3 484.7 L496.6 516.8 L496.9 486.4 L497.2 506.8 L497.5 475.8 L497.8 505.0 L498.1 493.3 L498.4 502.0 L498.7 469.6 L499.0 503.0 L499.3 485.1 L499.6 502.6 L499.9 490.0 L500.2 510.5 L500.5 485.5 L500.8 509.9 L501.1 475.0 L501.4 501.0 L501.7 469.9 L502.0 502.2 L502.3 489.5 L502.6 507.6 L502.9 488.7 L503.2 503.5 L503.5 488.4 L503.8 500.9 L504.1 482.1 L504.4 504.5 L504.7 487.2 L505.0 501.2 L505.3 483.3 L505.6 497.3 L505.9 475.6 L506.2 497.1 L506.5 490.8 L506.8 505.4 L507.1 484.9 L507.4 495.2 L507.7 480.4 L508.0 502.9 L508.3 478.1 L508.6 500.5 L508.9 477.3 L509.2 490.9 L509.5 475.8 L509.8 491.8 L510.1 461.0 L510.4 485.6 L510.7 471.6 L511.0 482.4 L511.3 463.7 L511.6 485.4 L511.9 472.7 L512.2 493.4 L512.5 475.7 L512.8 496.9 L513.1 473.5 L513.4 502.0 L513.7 493.8 L514.0 507.3 L514.3 496.7 L514.6 509.4 L514.9 501.3 L515.2 520.3 L515.5 499.4 L515.8 536.5 L516.1 502.4 L516.4 519.3 L516.7 492.6 L517.0 527.9 L517.3 508.1 L517.6 527.1 L517.9 486.4 L518.2 539.3 L518.5 506.0 L518.8 546.0 L519.1 511.4 L519.4 551.6 L519.7 503.8 L520.0 543.3 L520.3 516.3 L520.6 545.6 L520.9 528.4 L521.2 548.0 L521.5 540.4 L521.8 551.3 L522.1 546.2 L522.4 558.5"/>
<path d="M534.5 563.9 L534.8 569.0 L535.1 548.5 L535.4 556.4 L535.7 523.1 L536.0 551.9 L536.3 513.7 L536.6 538.5 L536.9 503.6 L537.2 539.0 L537.5 506.5 L537.8 517.6 L538.1 500.4 L538.4 514.3 L538.7 500.9 L539.0 512.9 L539.3 478.9 L539.6 519.9 L539.9 492.8 L540.2 523.8 L540.5 491.7 L540.8 513.2 L541.1 472.0 L541.4 516.8 L541.7 483.9 L542.0 505.6 L542.3 484.8 L542.6 508.7 L542.9 484.9 L543.2 503.1 L543.5 481.5 L543.8 499.5 L544.1 473.0 L544.4 505.3 L544.7 481.1 L545.0 499.0 L545.3 458.1 L545.6 515.1 L545.9 480.9 L546.2 492.8 L546.5 475.3 L546.8 492.8 L547.1 477.5 L547.4 498.6 L547.7 468.4 L548.0 501.0 L548.3 466.8 L548.6 500.4 L548.9 456.4 L549.2 489.2 L549.5 472.6 L549.8 500.1 L550.1 478.0 L550.4 500.2 L550.7 480.9 L551.0 499.0 L551.3 483.7 L551.6 503.4 L551.9 485.8 L552.2 509.3 L552.5 487.8 L552.8 522.5 L553.1 473.4 L553.4 509.0 L553.7 493.6 L554.0 511.6 L554.3 487.6 L554.6 519.8 L554.9 495.9 L555.2 526.0 L555.5 501.0 L555.8 534.2 L556.1 505.6 L556.4 533.4 L556.7 505.4 L557.0 532.4 L557.3 515.2 L557.6 540.0 L557.9 515.2 L558.2 541.0 L558.5 519.4 L558.8 546.1 L559.1 530.2 L559.4 555.8 L559.7 506.4 L560.0 556.2 L560.3 523.1 L560.6 571.1 L560.9 532.3 L561.2 553.8 L561.5 534.1 L561.8 558.1 L562.1 518.6 L562.4 567.5 L562.7 521.1 L563.0 574.2 L563.3 531.8 L563.6 572.8 L563.9 539.7 L564.2 575.3 L564.5 536.9 L564.8 595.1 L565.1 527.9 L565.4 572.6 L565.7 546.8 L566.0 599.5 L566.3 553.8 L566.6 573.2 L566.9 527.3 L567.2 580.0 L567.5 555.0 L567.8 576.5 L568.1 555.3 L568.4 584.0 L568.7 539.1 L569.0 590.1 L569.3 559.2 L569.6 584.7 L569.9 561.0 L570.2 594.2 L570.5 568.4 L570.8 588.8 L571.1 563.1 L571.4 598.6 L571.7 574.2 L572.0 592.0 L572.3 575.3 L572.6 590.3 L572.9 576.9 L573.2 608.8 L573.5 579.4 L573.8 589.4 L574.1 563.2 L574.4 608.1 L574.7 581.6 L575.0 606.2 L575.3 574.5 L575.6 592.9 L575.9 574.9 L576.2 601.3 L576.5 573.4 L576.8 593.7 L577.1 581.9 L577.4 593.6 L577.7 578.6 L578.0 593.7 L578.3 581.5 L578.6 593.2 L578.9 578.0 L579.2 599.9 L579.5 577.0 L579.8 595.2 L580.1 583.2 L580.4 597.9 L580.7 570.8 L581.0 593.0 L581.3 572.8 L581.6 606.4 L581.9 584.6 L582.2 596.0 L582.5 580.1 L582.8 592.9 L583.1 584.5 L583.4 598.4 L583.7 580.7 L584.0 599.2 L584.3 577.2 L584.6 598.0 L584.9 584.1 L585.2 598.0 L585.5 574.6 L585.8 593.9 L586.1 573.8 L586.4 597.7 L586.7 578.6 L587.0 599.1 L587.3 581.7 L587.6 608.0 L587.9 580.0 L588.2 593.1 L588.5 574.6 L588.8 592.9 L589.1 586.2 L589.4 607.6 L589.7 585.3 L590.0 597.4 L590.3 586.1 L590.6 596.9 L590.9 580.1 L591.2 602.1 L591.5 572.1 L591.8 599.0 L592.1 571.9 L592.4 595.3 L592.7 580.5 L593.0 599.0 L593.3 583.6 L593.6 607.5 L593.9 585.9 L594.2 610.3 L594.5 584.2 L594.8 598.4 L595.1 586.1 L595.4 599.7 L595.7 576.8 L596.0 599.5 L596.3 588.1 L596.6 598.5 L596.9 589.5 L597.2 602.3 L597.5 592.7 L597.8 601.9 L598.1 593.0 L598.4 603.0 L598.7 581.3 L599.0 606.0 L599.3 582.5 L599.6 610.3 L599.9 589.9 L600.2 607.6 L600.5 589.6 L600.8 600.5 L601.1 574.1 L601.4 600.0 L601.7 583.8 L602.0 596.7 L602.3 573.5 L602.6 600.4 L602.9 586.1 L603.2 600.2 L603.5 585.5 L603.8 598.8 L604.1 584.2 L604.4 597.0 L604.7 583.8 L605.0 593.4 L605.3 571.2 L605.6 595.1 L605.9 578.5 L606.2 598.8 L606.5 571.4 L606.8 603.9 L607.1 579.6 L607.4 599.3 L607.7 577.3 L608.0 603.8 L608.3 575.6 L608.6 591.1 L608.9 578.5 L609.2 589.7 L609.5 579.9 L609.8 591.7 L610.1 580.7 L610.4 590.1 L610.7 578.7 L611.0 587.9 L611.3 577.4 L611.6 593.0 L611.9 574.3 L612.2 590.3 L612.5 580.2 L612.8 589.7 L613.1 576.8 L613.4 589.2 L613.7 577.5 L614.0 595.6 L614.3 573.4 L614.6 587.4 L614.9 575.2 L615.2 589.6 L615.5 574.3 L615.8 586.2 L616.1 573.7 L616.4 584.6 L616.7 567.1 L617.0 583.9 L617.3 576.0 L617.6 593.7 L617.9 566.6 L618.2 582.3 L618.5 571.1 L618.8 585.9 L619.1 574.3 L619.4 592.5 L619.7 572.0 L620.0 585.4 L620.3 562.5 L620.6 579.5 L620.9 563.1 L621.2 579.9 L621.5 568.6 L621.8 584.1 L622.1 566.2 L622.4 584.5 L622.7 570.2 L623.0 579.9 L623.3 567.2 L623.6 577.3 L623.9 567.9 L624.2 585.8 L624.5 571.0 L624.8 586.5 L625.1 568.3 L625.4 574.4 L625.7 565.5 L626.0 581.2 L626.3 563.0 L626.6 576.1 L626.9 561.5 L627.2 572.9 L627.5 561.4 L627.8 575.8 L628.1 564.0 L628.4 570.4 L628.7 558.0 L629.0 568.7 L629.3 556.9 L629.6 570.2 L629.9 559.5 L630.2 569.7 L630.5 550.1 L630.8 567.3 L631.1 549.9 L631.4 566.4 L631.7 555.4 L632.0 574.7 L632.3 546.1 L632.6 571.5 L632.9 554.0 L633.2 561.9 L633.5 553.5 L633.8 562.3 L634.1 539.7 L634.4 562.6 L634.7 541.3 L635.0 559.2 L635.3 542.2 L635.6 557.5 L635.9 536.9 L636.2 552.8 L636.5 535.9 L636.8 546.9 L637.1 524.7 L637.4 544.3 L637.7 529.6 L638.0 541.4 L638.3 520.4 L638.6 543.6 L638.9 524.1 L639.2 538.1 L639.5 530.7 L639.8 542.0 L640.1 532.6 L640.4 546.5 L640.7 524.6 L641.0 553.7 L641.3 539.9 L641.6 559.1 L641.9 545.0 L642.2 570.9 L642.5 533.7 L642.8 565.5 L643.1 546.8 L643.4 566.0 L643.7 542.7 L644.0 566.8 L644.3 546.0 L644.6 567.1 L644.9 549.5 L645.2 569.6 L645.5 553.2 L645.8 576.4 L646.1 557.0 L646.4 578.8 L646.7 556.2 L647.0 590.1 L647.3 561.7 L647.6 574.4 L647.9 558.7 L648.2 596.9 L648.5 559.6 L648.8 574.3 L649.1 556.2 L649.4 590.3 L649.7 542.1 L650.0 582.1 L650.3 554.1 L650.6 585.7 L650.9 558.7 L651.2 579.0 L651.5 556.0 L651.8 577.8 L652.1 557.0 L652.4 576.4 L652.7 551.3 L653.0 578.0 L653.3 559.1 L653.6 583.5 L653.9 551.7 L654.2 592.2 L654.5 559.9 L654.8 583.3 L655.1 564.3 L655.4 580.2 L655.7 546.4 L656.0 575.8 L656.3 560.3 L656.6 574.6 L656.9 555.8 L657.2 588.6 L657.5 555.5 L657.8 573.0 L658.1 551.6 L658.4 569.6 L658.7 536.5 L659.0 561.8 L659.3 542.9 L659.6 555.9 L659.9 537.4 L660.2 553.2 L660.5 540.5 L660.8 550.3 L661.1 532.0 L661.4 555.0 L661.7 533.9 L662.0 551.8 L662.3 532.8 L662.6 551.7 L662.9 527.1 L663.2 545.4 L663.5 528.7 L663.8 549.9 L664.1 522.1 L664.4 555.6 L664.7 506.3 L665.0 541.4 L665.3 523.9 L665.6 552.5 L665.9 508.4 L666.2 544.5 L666.5 517.4 L666.8 537.0 L667.1 515.0 L667.4 525.0 L667.7 488.0 L668.0 520.9 L668.3 509.1 L668.6 516.4 L668.9 504.3 L669.2 514.1"/>
<path d="M335.5 458.0V495.0M336.4 463.0V500.0M347.5 464.0V504.0M341.0 474.0V506.0M389.5 450.0V491.0M388.6 456.0V488.0M396.0 445.0V474.0M396.8 450.0V480.0M394.0 484.0V518.0M358.5 495.0V552.0M244.3 505.0V535.0M240.0 486.0V512.0M249.5 520.0V545.0M316.3 552.0V578.5M295.0 565.0V584.0M285.0 568.0V585.0M301.7 546.0V570.0M307.0 538.0V560.0M511.0 458.0V491.0M510.2 464.0V494.0M488.0 517.0V559.0M487.2 512.0V540.0M565.7 528.0V592.6M598.5 583.0V614.5M639.0 514.0V545.0M549.0 463.0V502.0M544.0 467.0V517.0M546.5 466.0V508.0M669.4 487.0V527.0M668.5 492.0V530.0M648.7 548.0V592.6M572.0 565.0V610.0M581.0 574.0V606.0M592.0 576.0V607.0M607.0 570.0V602.0M656.0 552.0V590.0M459.0 471.0V502.0M472.0 504.0V533.0M500.0 474.0V517.0M493.7 489.0V528.0M520.0 497.0V550.0M413.0 467.0V489.0M401.0 465.0V493.0M378.0 476.0V504.0M384.7 469.0V504.0M441.0 493.0V520.0M428.0 491.0V511.0M465.0 491.0V522.0M478.4 482.0V513.0M559.0 513.0V561.0M616.0 570.0V596.0M624.7 563.0V585.0M633.4 546.0V572.0M642.0 532.0V572.0M662.0 520.0V562.0M266.8 551.0V566.0M258.5 553.0V567.0M275.5 567.0V579.0M321.0 536.0V553.0M328.0 510.0V525.0"/>
</g>
<g shape-rendering="auto" transform="matrix(1 0.00002 0 1 0 0)">
<text x="317" y="187">RBSP-A/EFW spectra</text>
<text x="295" y="414">RBSP-A/ect-hope moments e Tperp/Tpar</text>
<text x="173" y="283.3">10</text>
<text x="193.5" y="275.3">5</text>
<text x="173" y="383.8">10</text>
<text x="193.5" y="375.8">4</text>
<text transform="translate(161 288) rotate(-90)" text-anchor="middle">Hz</text>
<text x="215.5" y="408.5">00:00</text>
<text x="215.5" y="425">2012-12-02</text>
<text x="431.5" y="408.5">12:00</text>
<text x="647.5" y="408.5">00:00</text>
<text x="647.5" y="425">2012-12-03</text>
<text x="736.5" y="386.8">10</text>
<text x="756" y="379">-22</text>
<text x="736.5" y="360.13">10</text>
<text x="756" y="352.33">-20</text>
<text x="736.5" y="333.46">10</text>
<text x="756" y="325.66">-18</text>
<text x="736.5" y="306.79">10</text>
<text x="756" y="298.99">-16</text>
<text x="736.5" y="280.12">10</text>
<text x="756" y="272.32">-14</text>
<text x="736.5" y="253.45">10</text>
<text x="756" y="245.65">-12</text>
<text x="736.5" y="226.78">10</text>
<text x="756" y="218.98">-10</text>
<text transform="translate(804.5 288) rotate(-90)" text-anchor="middle">V^2/m^2/Hz</text>
<text x="202" y="605.3" text-anchor="end">1.2</text>
<text x="202" y="567.3" text-anchor="end">1.4</text>
<text x="202" y="535.3" text-anchor="end">1.6</text>
<text x="202" y="506.3" text-anchor="end">1.8</text>
<text x="202" y="480.3" text-anchor="end">2.0</text>
<text x="202" y="457.3" text-anchor="end">2.2</text>
<text transform="translate(165.5 531) rotate(-90)" text-anchor="middle" style="letter-spacing:-0.38px">e Tperp/Tpar</text>
<text x="261.5" y="653" text-anchor="end">00:00</text>
<text x="477.5" y="653" text-anchor="end">12:00</text>
<text x="693.5" y="653" text-anchor="end">00:00</text>
<text x="261.5" y="673" text-anchor="end">4.225</text>
<text x="477.5" y="673" text-anchor="end">5.756</text>
<text x="693.5" y="673" text-anchor="end">3.179</text>
<text x="261.5" y="693" text-anchor="end">-10.580</text>
<text x="477.5" y="693" text-anchor="end">-1.544</text>
<text x="693.5" y="693" text-anchor="end">-16.190</text>
<text x="261.5" y="713" text-anchor="end">2.247</text>
<text x="477.5" y="713" text-anchor="end">5.398</text>
<text x="693.5" y="713" text-anchor="end">8.125</text>
<text x="261.5" y="733" text-anchor="end">4.373</text>
<text x="477.5" y="733" text-anchor="end">5.760</text>
<text x="693.5" y="733" text-anchor="end">3.447</text>
<text x="167.5" y="673" text-anchor="end">R</text>
<text x="168" y="677.5" style="font-size:9px;font-weight:bold;stroke:none">E</text>
<text x="175" y="693" text-anchor="end">MLat</text>
<text x="175" y="713" text-anchor="end">MLT</text>
<text x="175" y="733" text-anchor="end">L</text>
<text x="454" y="757" text-anchor="middle">2012-12-01 (336) 23:00 to 2012-12-03 (338) 01:00</text>
</g>
</svg>
<div id="popup" class="a"><div class="a hl"></div><div class="a hv"></div></div>
<div class="a ui it" style="top:64px">Cache</div>
<div class="a ui it" style="top:85px">PNG Walk Viewer</div>
<div class="a ui it" style="top:104px;letter-spacing:0.37px">Create PNG Walk...</div>
<div class="a ui it" style="top:123px;letter-spacing:0.22px">Run Batch...</div>
<div class="a ui it" style="top:146px;letter-spacing:0.2px">Events List</div>
<div class="a ui it" style="top:165px;letter-spacing:0.19px">Fix Layout</div>
<div class="a ui it" style="top:186px;letter-spacing:0.43px">Aggregate...</div>
<div class="a ui it" style="top:205px">Replace File...</div>
<div class="a ui it" style="top:224px;letter-spacing:0.44px">Mash Data...</div>
<div class="a ui it" style="top:244px;letter-spacing:0.37px">Additional Operations...</div>
<div class="a ui it" style="top:266px">Decode URL</div>
<div class="a ui it" style="top:286px">Reload All Data</div>
<div class="a ui it" style="top:310px;letter-spacing:0.51px">Manage and Browse Tools...</div>
<div class="a ui it" style="top:331px;letter-spacing:0.37px">Create Screen Shot</div>
<div class="a ui it" style="top:350px">Start SAMP Hub and Listener</div>
<div class="a ui it" style="top:369px;letter-spacing:0.42px">startScreenShots.jy</div>
<div class="a ui it" style="top:388px">updateAutoplot.jy</div>
<div class="a ui it" style="top:407px;letter-spacing:0.15px">realTime.jy</div>
<div class="a sep" style="top:81px"></div>
<div class="a sep" style="top:141px"></div>
<div class="a sep" style="top:182px"></div>
<div class="a sep" style="top:262px"></div>
<div class="a sep" style="top:305px"></div>
<div class="a sep" style="top:327px"></div>
<div class="a ui acc" style="left:560px;width:92px;text-align:right;top:167px">Ctrl-F</div>
<div class="a ui acc" style="left:560px;width:92px;text-align:right;top:287px">Ctrl-L</div>
<svg class="a" style="left:655px;top:66px" width="7" height="11"><path d="M1 1V9.5L5.5 5.25Z" fill="#333"/></svg>
<svg class="a" style="left:395px;top:243px" width="16" height="16" viewBox="0 0 16 16">
<defs><radialGradient id="lg" cx="0.4" cy="0.35" r="0.7"><stop offset="0" stop-color="#d4e9ff"/><stop offset="1" stop-color="#8fc2fb"/></radialGradient>
<linearGradient id="hg" x1="0" y1="1" x2="1" y2="0"><stop offset="0" stop-color="#f6c61e"/><stop offset="0.5" stop-color="#f0861c"/><stop offset="1" stop-color="#e9602a"/></linearGradient></defs>
<g fill="#4d4d4d"><rect x="1" y="1" width="2" height="14"/><rect x="6.3" y="1" width="1.8" height="14"/><rect x="11.3" y="1" width="1.8" height="14"/><rect x="7" y="9.5" width="5" height="1.4"/></g>
<path d="M2.4 13.6L6.4 10.2" stroke="url(#hg)" stroke-width="1.9" stroke-linecap="round"/>
<circle cx="10" cy="6.3" r="3.3" fill="url(#lg)" stroke="#dfe9f6" stroke-width="1.1"/>
</svg>
<svg class="a" style="left:395px;top:285px" width="16" height="16" viewBox="0 0 16 16">
<defs><linearGradient id="rg" x1="0" y1="0" x2="0.3" y2="1"><stop offset="0" stop-color="#9cc7f0"/><stop offset="0.5" stop-color="#5c9ddc"/><stop offset="1" stop-color="#3f86d0"/></linearGradient></defs>
<ellipse cx="7.6" cy="14.9" rx="5" ry="0.9" fill="#c9d6e6" opacity=".7"/>
<path d="M11.17 5.23A5.05 5.05 0 1 0 11.74 11.7" fill="none" stroke="url(#rg)" stroke-width="3.5"/>
<path d="M8.6 5.6L14.9 0.9V8.3Z" fill="#6aa6e0"/>
</svg>
<svg class="a" style="left:418px;top:46px" width="48" height="62" viewBox="417.5 46 48 62">
<defs><linearGradient id="cg" x1="0" y1="0" x2="0.6" y2="1"><stop offset="0.45" stop-color="#fff"/><stop offset="1" stop-color="#dcdcdc"/></linearGradient></defs>
<g transform="translate(427.8 56.5) scale(1.035) translate(-427.8 -56.5)"><path d="M427.8 56.5V82.3L436.7 77.2L446.2 95.8L452 92.8L443.2 74.8L449.8 70.6Z" fill="#111" stroke="#111" stroke-width="6.4" stroke-linejoin="round" transform="translate(0.6 1)" opacity=".55"/>
<path d="M427.8 56.5V82.3L436.7 77.2L446.2 95.8L452 92.8L443.2 74.8L449.8 70.6Z" fill="#111" stroke="#111" stroke-width="6.6" stroke-linejoin="round"/>
<path d="M427.8 56.5V82.3L436.7 77.2L446.2 95.8L452 92.8L443.2 74.8L449.8 70.6Z" fill="url(#cg)" stroke="url(#cg)" stroke-width="0.6" stroke-linejoin="round"/></g>
</svg>
</body></html>
